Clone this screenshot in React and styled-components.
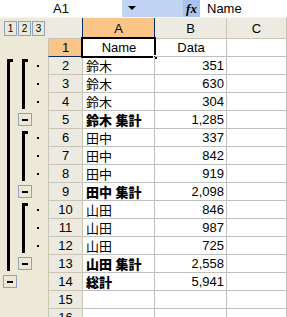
import React from "react";
import styled, { createGlobalStyle } from "styled-components";

const Global = createGlobalStyle`
  html, body { margin: 0; padding: 0; background: #ffffff; overflow: hidden; }
  body { font-family: "Liberation Sans", "Noto Sans CJK JP", sans-serif; font-size: 12px; color: #000; }
`;

const Frame = styled.div`
  width: 287px;
  height: 317px;
  overflow: hidden;
  background: #ece9d8;
`;

const TopBar = styled.div`
  display: flex;
  height: 17px;
  border-bottom: 1px solid #f4f6fb;
`;

const NameBox = styled.div`
  width: 122px;
  background: #ffffff;
  display: flex;
  align-items: center;
  justify-content: center;
  font-size: 13px;
`;

const DropArea = styled.div`
  width: 61px;
  background: #c2d4f5;
  display: flex;
  align-items: center;
  padding-left: 6px;
  box-sizing: border-box;
`;

const FxBox = styled.div`
  width: 17px;
  background: #a9c3f1;
  display: flex;
  align-items: center;
  justify-content: center;
  font-family: "Liberation Serif", serif;
  font-style: italic;
  font-weight: bold;
  font-size: 13px;
`;

const FormulaBox = styled.div`
  flex: 1;
  background: #ffffff;
  display: flex;
  align-items: center;
  padding-left: 7px;
  font-size: 13px;
`;

const Body = styled.div`
  display: flex;
`;

const OutlinePane = styled.div`
  width: 48px;
  flex: none;
  display: flex;
  flex-direction: column;
  background: #ece9d8;
`;

const LevelBar = styled.div`
  height: 20px;
  border-bottom: 1px solid #ece9d8;
  display: flex;
  align-items: center;
  gap: 1px;
  padding-left: 4px;
`;

const LevelBtn = styled.div`
  width: 11px;
  height: 13px;
  border: 1px solid #8ea3bd;
  display: flex;
  align-items: center;
  justify-content: center;
  font-size: 10px;
  background: #ece9d8;
`;

const Sheet = styled.div`
  flex: 1;
  display: grid;
  grid-template-columns: 35px 72px 72px 1fr;
  grid-auto-rows: 18px;
  grid-template-rows: 21px;
  background: #ffffff;
`;

const ColHead = styled.div`
  box-sizing: border-box;
  background: ${(p) => (p.$sel ? "#fbc587" : "#edebe1")};
  border-right: 1px solid ${(p) => (p.$sel ? "#0b2a70" : "#c8c5b5")};
  border-left: ${(p) => (p.$sel ? "1px solid #0b2a70" : "none")};
  border-bottom: 1px solid #c8c5b5;
  display: flex;
  align-items: center;
  justify-content: center;
  font-size: 13px;
  margin-left: ${(p) => (p.$sel ? "-1px" : "0")};
`;

const RowHead = styled.div`
  box-sizing: border-box;
  background: ${(p) => (p.$sel ? "#fbc587" : "#edebe1")};
  border-right: 1px solid #c8c5b5;
  border-bottom: 1px solid ${(p) => (p.$sel ? "#0b2a70" : "#c8c5b5")};
  border-left: 1px solid #c8c5b5;
  display: flex;
  align-items: center;
  justify-content: center;
  font-size: 13px;
`;

const Cell = styled.div`
  position: relative;
  box-sizing: border-box;
  border-right: 1px solid #c0c0c0;
  border-bottom: 1px solid #c0c0c0;
  display: flex;
  align-items: center;
  justify-content: ${(p) => (p.$align === "right" ? "flex-end" : p.$align === "center" ? "center" : "flex-start")};
  padding: 0 2px 0 3px;
  font-size: 13px;
  font-weight: ${(p) => (p.$bold ? 900 : 400)};
  white-space: nowrap;
`;

const ActiveBorder = styled.div`
  position: absolute;
  left: -2px;
  top: -2px;
  right: -2px;
  bottom: -2px;
  border: 2px solid #000;
  pointer-events: none;
`;

const FillHandle = styled.div`
  position: absolute;
  right: -4px;
  bottom: -4px;
  width: 5px;
  height: 5px;
  background: #000;
  border: 1px solid #fff;
  box-sizing: border-box;
`;

const rows = [
  ["Name", "Data", "head"],
  ["鈴木", "351"],
  ["鈴木", "630"],
  ["鈴木", "304"],
  ["鈴木 集計", "1,285", "sum"],
  ["田中", "337"],
  ["田中", "842"],
  ["田中", "919"],
  ["田中 集計", "2,098", "sum"],
  ["山田", "846"],
  ["山田", "987"],
  ["山田", "725"],
  ["山田 集計", "2,558", "sum"],
  ["総計", "5,941", "sum"],
  ["", ""],
  ["", ""],
];

const RH = 18;
const top = (i) => (i - 1) * RH; // row i top (1-based)
const mid = (i) => (i - 1) * RH + 8;

function MinusBox({ cx, row }) {
  const y = mid(row) - 6;
  return (
    <g>
      <rect x={cx - 6.5} y={y + 0.5} width={13} height={12} fill="#ece9d8" stroke="#8ea3bd" />
      <rect x={cx - 3} y={y + 6} width={6} height={2} fill="#000" />
    </g>
  );
}

function Bracket({ x, from, to }) {
  const y1 = top(from) + 2;
  const y2 = top(to) + RH - 2;
  return (
    <g fill="#000">
      <rect x={x} y={y1} width={3} height={y2 - y1} />
      <rect x={x} y={y1} width={6} height={3} />
    </g>
  );
}

function Outline() {
  const dots = [2, 3, 4, 6, 7, 8, 10, 11, 12];
  return (
    <svg width="48" height="280" style={{ display: "block" }}>
      <Bracket x={7} from={2} to={13} />
      <Bracket x={22} from={2} to={4} />
      <Bracket x={22} from={6} to={8} />
      <Bracket x={22} from={10} to={12} />
      {dots.map((r) => (
        <rect key={r} x={37} y={mid(r)} width={2} height={2} fill="#000" />
      ))}
      <MinusBox cx={25} row={5} />
      <MinusBox cx={25} row={9} />
      <MinusBox cx={25} row={13} />
      <MinusBox cx={10} row={14} />
    </svg>
  );
}

export default function App() {
  return (
    <Frame>
      <Global />
      <TopBar>
        <NameBox>A1</NameBox>
        <DropArea>
          <svg width="9" height="5">
            <path d="M0 0 H8 L4 4 Z" fill="#000" />
          </svg>
        </DropArea>
        <FxBox>fx</FxBox>
        <FormulaBox>Name</FormulaBox>
      </TopBar>
      <Body>
        <OutlinePane>
          <LevelBar>
            <LevelBtn>1</LevelBtn>
            <LevelBtn>2</LevelBtn>
            <LevelBtn>3</LevelBtn>
          </LevelBar>
          <Outline />
        </OutlinePane>
        <Sheet>
          <ColHead />
          <ColHead $sel>A</ColHead>
          <ColHead>B</ColHead>
          <ColHead>C</ColHead>
          {rows.map(([name, val, kind], i) => (
            <React.Fragment key={i}>
              <RowHead $sel={i === 0}>{i + 1}</RowHead>
              <Cell $align={kind === "head" ? "center" : "left"} $bold={kind === "sum"}>
                {name}
                {i === 0 && (
                  <ActiveBorder>
                    <FillHandle />
                  </ActiveBorder>
                )}
              </Cell>
              <Cell $align={kind === "head" ? "center" : "right"}>{val}</Cell>
              <Cell />
            </React.Fragment>
          ))}
        </Sheet>
      </Body>
    </Frame>
  );
}
